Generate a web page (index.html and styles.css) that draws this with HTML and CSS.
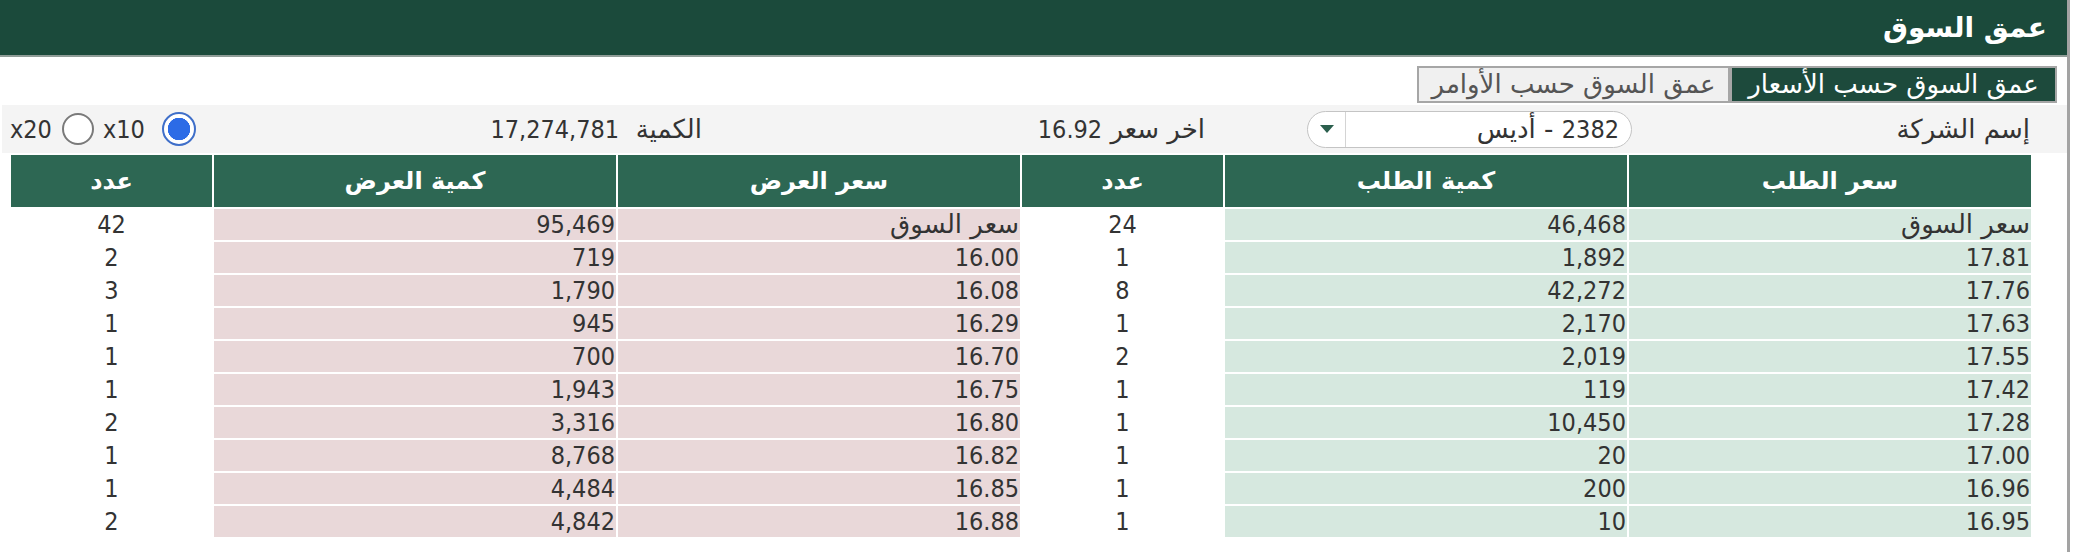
FILE: index.html
```html
<!DOCTYPE html>
<html lang="ar">
<head>
<meta charset="utf-8">
<title>عمق السوق</title>
<link rel="stylesheet" href="styles.css">
</head>
<body>
<div class="panel" dir="rtl">
  <div class="titlebar">عمق السوق</div>
  <div class="tabs">
    <div class="tab active">عمق السوق حسب الأسعار</div>
    <div class="tab">عمق السوق حسب الأوامر</div>
  </div>
  <div class="bar">
    <div class="cell-label">إسم الشركة</div>
    <div class="select">
      <span class="select-text"><span class="n">2382</span> - أديس</span>
      <span class="select-btn"><span class="tri"></span></span>
    </div>
    <div class="cell-price">اخر سعر <span class="n">16.92</span></div>
    <div class="cell-qty">الكمية&nbsp; <span class="n">17,274,781</span></div>
    <div class="cell-radios">
      <span class="radio on"></span><span class="rlabel r1 n">x10</span>
      <span class="radio"></span><span class="rlabel n">x20</span>
    </div>
  </div>
  <div class="table-wrap">
    <table class="depth">
      <colgroup>
        <col class="w-wide"><col class="w-wide"><col class="w-narrow">
        <col class="w-wide"><col class="w-wide"><col class="w-narrow">
      </colgroup>
      <thead>
        <tr><th>سعر الطلب</th><th>كمية الطلب</th><th>عدد</th><th>سعر العرض</th><th>كمية العرض</th><th>عدد</th></tr>
      </thead>
      <tbody>
        <tr><td class="bid">سعر السوق</td><td class="bid n">46,468</td><td class="cnt n">24</td><td class="ask">سعر السوق</td><td class="ask n">95,469</td><td class="cnt n">42</td></tr>
        <tr><td class="bid n">17.81</td><td class="bid n">1,892</td><td class="cnt n">1</td><td class="ask n">16.00</td><td class="ask n">719</td><td class="cnt n">2</td></tr>
        <tr><td class="bid n">17.76</td><td class="bid n">42,272</td><td class="cnt n">8</td><td class="ask n">16.08</td><td class="ask n">1,790</td><td class="cnt n">3</td></tr>
        <tr><td class="bid n">17.63</td><td class="bid n">2,170</td><td class="cnt n">1</td><td class="ask n">16.29</td><td class="ask n">945</td><td class="cnt n">1</td></tr>
        <tr><td class="bid n">17.55</td><td class="bid n">2,019</td><td class="cnt n">2</td><td class="ask n">16.70</td><td class="ask n">700</td><td class="cnt n">1</td></tr>
        <tr><td class="bid n">17.42</td><td class="bid n">119</td><td class="cnt n">1</td><td class="ask n">16.75</td><td class="ask n">1,943</td><td class="cnt n">1</td></tr>
        <tr><td class="bid n">17.28</td><td class="bid n">10,450</td><td class="cnt n">1</td><td class="ask n">16.80</td><td class="ask n">3,316</td><td class="cnt n">2</td></tr>
        <tr><td class="bid n">17.00</td><td class="bid n">20</td><td class="cnt n">1</td><td class="ask n">16.82</td><td class="ask n">8,768</td><td class="cnt n">1</td></tr>
        <tr><td class="bid n">16.96</td><td class="bid n">200</td><td class="cnt n">1</td><td class="ask n">16.85</td><td class="ask n">4,484</td><td class="cnt n">1</td></tr>
        <tr><td class="bid n">16.95</td><td class="bid n">10</td><td class="cnt n">1</td><td class="ask n">16.88</td><td class="ask n">4,842</td><td class="cnt n">2</td></tr>
      </tbody>
    </table>
  </div>
</div>
</body>
</html>
```

FILE: styles.css
```css
html, body {
  margin: 0;
  padding: 0;
  background: #ffffff;
}

body {
  font-family: "DejaVu Sans", sans-serif;
  color: #333333;
  font-size: 26px;
}

.n {
  font-family: "DejaVu Sans Condensed", "DejaVu Sans", sans-serif;
  font-size: 25px;
}

.panel {
  width: 2067px;
  height: 552px;
  border-right: 3px solid #a3a3a3;
}

.titlebar {
  height: 55px;
  line-height: 55px;
  background: #1b4a3b;
  color: #ffffff;
  font-weight: bold;
  font-size: 28px;
  padding-right: 20px;
  border-bottom: 2px solid #8f9c97;
}

.tabs {
  display: flex;
  padding-top: 9px;
  padding-right: 10px;
  height: 37px;
}

.tab {
  height: 37px;
  box-sizing: border-box;
  border: 2px solid #a6a6a6;
  background: #f0f0f0;
  color: #555555;
  font-size: 26px;
  line-height: 33px;
  white-space: nowrap;
  overflow: hidden;
  width: 313px;
  text-align: center;
}

.tab.active {
  width: 327px;
  background: #1d4a3c;
  color: #ffffff;
}

.bar {
  display: flex;
  align-items: center;
  margin-top: 2px;
  width: 2065px;
  height: 48px;
  background: #f4f4f4;
}

.cell-label {
  width: 435px;
  box-sizing: border-box;
  padding-right: 37px;
  white-space: nowrap;
}

.select {
  width: 325px;
  height: 37px;
  box-sizing: border-box;
  border: 1.5px solid #c4c4c4;
  border-radius: 19px;
  background: #ffffff;
  display: flex;
  align-items: center;
}

.select-text {
  flex: 1;
  padding-right: 12px;
  white-space: nowrap;
}

.select-btn {
  width: 37px;
  height: 100%;
  border-right: 1.5px solid #d4d4d4;
  display: flex;
  align-items: center;
  justify-content: center;
}

.tri {
  width: 0;
  height: 0;
  border-left: 7px solid transparent;
  border-right: 7px solid transparent;
  border-top: 8px solid #2b5f4d;
}

.cell-price {
  width: 305px;
  box-sizing: border-box;
  padding-right: 102px;
  white-space: nowrap;
}

.cell-qty {
  width: 500px;
  box-sizing: border-box;
  padding-right: 300px;
  white-space: nowrap;
}

.cell-radios {
  flex: 1;
  display: flex;
  align-items: center;
  justify-content: flex-end;
  padding-left: 8px;
}

.radio {
  width: 32px;
  height: 32px;
  box-sizing: border-box;
  border-radius: 50%;
  border: 2px solid #7a7a7a;
  background: #ffffff;
  margin-left: 10px;
}

.radio.on {
  width: 34px;
  height: 34px;
  border: 2px solid #3f6fc9;
  background: radial-gradient(circle, #2c6be6 0 11px, #ffffff 11.5px);
  margin-left: 17px;
}

.rlabel {
  direction: ltr;
}

.rlabel.r1 {
  margin-left: 9px;
}

.table-wrap {
  padding-right: 34px;
}

.depth {
  border-collapse: separate;
  border-spacing: 2px;
  table-layout: fixed;
  width: 2024px;
}

.w-wide { width: 402px; }
.w-narrow { width: 201px; }

.depth th {
  height: 52px;
  padding: 0;
  background: #2d6753;
  color: #ffffff;
  font-weight: bold;
  font-size: 24px;
  text-align: center;
}

.depth td {
  height: 31px;
  padding: 0 1px;
  line-height: 31px;
  white-space: nowrap;
  text-align: right;
}

.depth td.bid {
  background: #d6e8df;
}

.depth td.ask {
  background: #e9d8d9;
}

.depth td.cnt {
  text-align: center;
  background: #ffffff;
}
```
